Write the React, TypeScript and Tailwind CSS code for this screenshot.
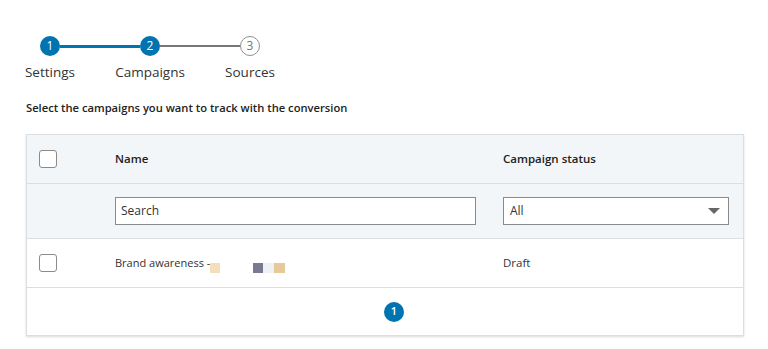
import React from "react";

const font = { fontFamily: '"Open Sans", "Noto Sans", sans-serif' };

function Step({ n, label, state, left, right }: { n: number; label: string; state: "done" | "current" | "todo"; left: string; right: string }) {
  const filled = state !== "todo";
  return (
    <div className="flex w-[100px] flex-col items-center">
      <div className="flex h-[20px] w-full items-center">
        <div className={`flex-1 ${left}`} />
        <div
          className={
            filled
              ? "flex h-[20px] w-[20px] items-center justify-center rounded-full bg-[#0073b1] text-[12px] text-white"
              : "flex h-[20px] w-[20px] items-center justify-center rounded-full border border-[#8f8f8f] bg-white text-[12px] text-[#777]"
          }
        >
          {n}
        </div>
        <div className={`flex-1 ${right}`} />
      </div>
      <div className="mt-[6px] text-[13.5px] leading-[20px] text-[#333]">{label}</div>
    </div>
  );
}

function Checkbox() {
  return <div className="h-[18px] w-[18px] rounded-[3px] border border-[#8a8a8a] bg-white" />;
}

export default function App() {
  return (
    <div className="h-[349px] w-[768px] bg-white" style={font}>
      <div className="flex pt-[36px]">
        <Step n={1} label="Settings" state="done" left="h-[3px] bg-transparent" right="h-[3px] bg-[#0073b1]" />
        <Step n={2} label="Campaigns" state="current" left="h-[3px] bg-[#0073b1]" right="h-[2px] bg-[#777]" />
        <Step n={3} label="Sources" state="todo" left="h-[2px] bg-[#777]" right="h-[2px] bg-transparent" />
      </div>
      <div className="mt-[18px] pl-[26px] text-[11.2px] font-semibold leading-[16px] text-[#222]">
        Select the campaigns you want to track with the conversion
      </div>
      <div className="ml-[26px] mt-[18px] w-[718px] border border-[#dcdfe2] shadow-[0_1px_2px_rgba(0,0,0,0.15)]">
        <div className="flex h-[49px] items-center border-b border-[#dcdfe2] bg-[#f3f6f8]">
          <div className="w-[88px] pl-[12px]">
            <Checkbox />
          </div>
          <div className="w-[388px] text-[11.5px] font-semibold text-[#222]">Name</div>
          <div className="text-[11.5px] font-semibold text-[#222]">Campaign status</div>
        </div>
        <div className="flex h-[55px] items-center border-b border-[#dcdfe2] bg-[#f3f6f8]">
          <div className="w-[88px]" />
          <div className="flex h-[28px] w-[361px] items-center border border-[#8a8a8a] bg-white px-[5px] text-[12px] text-[#333]">
            Search
          </div>
          <div className="w-[27px]" />
          <div className="flex h-[28px] w-[226px] items-center justify-between border border-[#8a8a8a] bg-white pl-[6px] pr-[8px] text-[12px] text-[#333]">
            <span>All</span>
            <svg width="12" height="7" viewBox="0 0 12 7">
              <path d="M0 0 L12 0 L6 6 Z" fill="#666" />
            </svg>
          </div>
        </div>
        <div className="flex h-[49px] items-center border-b border-[#dcdfe2] bg-white">
          <div className="w-[88px] pl-[12px]">
            <Checkbox />
          </div>
          <div className="flex w-[388px] items-center text-[11px] text-[#333]">
            <span>Brand awareness -</span>
            <span className="h-[10px] w-[10px] translate-y-[5px] bg-[#f3dfb9]" />
            <span className="ml-[33px] h-[10px] w-[10px] translate-y-[5px] bg-[#7b7891]" />
            <span className="h-[10px] w-[11px] translate-y-[5px] bg-[#eef1f6]" />
            <span className="h-[10px] w-[11px] translate-y-[5px] bg-[#e8c99a]" />
          </div>
          <div className="text-[11.5px] text-[#333]">Draft</div>
        </div>
        <div className="flex h-[47px] items-center justify-center bg-white">
          <div className="ml-[18px] flex h-[20px] w-[20px] items-center justify-center rounded-full bg-[#0073b1] text-[11px] font-semibold text-white">
            1
          </div>
        </div>
      </div>
    </div>
  );
}
